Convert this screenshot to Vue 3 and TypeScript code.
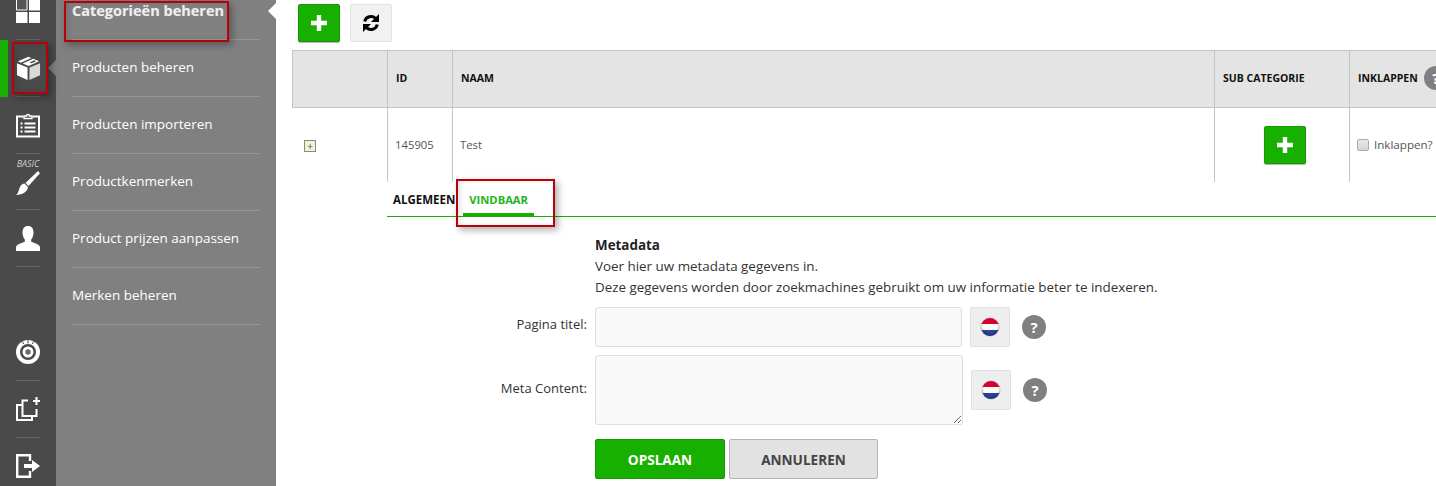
<script setup lang="ts">
const subItems: string[] = [
  'Categorieën beheren',
  'Producten beheren',
  'Producten importeren',
  'Productkenmerken',
  'Product prijzen aanpassen',
  'Merken beheren',
]
</script>

<template>
  <div class="page">
    <nav class="rail">
      <div class="rail-top">
        <div class="rail-item">
          <svg width="24" height="24" viewBox="0 0 24 24">
            <path fill="#fff" d="M13 0h11v11.500H13zM0 13h11.500v11H0zM13 13h11v11H13z" />
            <path fill="#555" stroke="#fff" stroke-width="1" d="M.5 -1h10.500v12H.5z" />
          </svg>
        </div>
        <div class="rail-item active">
          <svg width="25" height="25" viewBox="0 0 26 26">
            <path fill="#fff" d="M1 7.500l11 4.500v13L1 20z" />
            <path fill="#d8d8d8" d="M14 12l11-4.500V20l-11 5z" />
            <path fill="#fff" d="M2 5.500L13 .8l3 1.200L5 7zM7 7.800l11-5 6 2.700-11 5z" />
            <path fill="#4a4a4a" d="M14 6.700l5-2.200 2 .9-5 2.200z" />
          </svg>
          <span class="rail-notch"></span>
        </div>
        <div class="rail-item">
          <svg width="24" height="25" viewBox="0 0 24 25">
            <path fill="none" stroke="#fff" stroke-width="2" d="M7 3.500H1v20h22v-20h-6" />
            <path fill="none" stroke="#fff" stroke-width="1.500" d="M8 5.500V3h2.500a1.500 1.500 0 0 1 3 0H16v2.500z" />
            <path fill="#fff" d="M4.500 9.500h2v2h-2zM8.500 9.500h11v2h-11zM4.500 13.500h2v2h-2zM8.500 13.500h11v2h-11zM4.500 17.500h2v2h-2zM8.500 17.500h11v2h-11z" />
          </svg>
        </div>
        <div class="rail-item basic">
          <span class="basic-label">BASIC</span>
          <svg width="24" height="24" viewBox="0 0 24 24">
            <path fill="#fff" d="M22 0l2 2.200L12.500 15 9.500 12z" />
            <path fill="#fff" d="M8.500 12.500l3.500 3.500c-.5 4-4.500 8-12 8 3-2 2.500-6 4.500-9 1-1.500 2.500-2.300 4-2.500z" />
          </svg>
        </div>
        <div class="rail-item">
          <svg width="24" height="25" viewBox="0 0 24 25">
            <path fill="#fff" d="M12 0c3.800 0 5.500 2.700 5.500 6.500 0 3-1 5.500-2.300 7v2.300c3 1.300 8.800 2.500 8.800 5.700V25H0v-3.500c0-3.200 5.800-4.400 8.800-5.700v-2.300C7.500 12 6.500 9.500 6.500 6.500 6.500 2.700 8.200 0 12 0z" />
          </svg>
        </div>
      </div>
      <div class="rail-bottom">
        <div class="rail-item">
          <svg width="24" height="24" viewBox="0 0 24 24">
            <circle cx="12" cy="12" r="12" fill="#fff" />
            <circle cx="12" cy="12" r="8" fill="#4a4a4a" />
            <circle cx="12" cy="12" r="5.500" fill="#fff" />
            <circle cx="12" cy="12" r="2.700" fill="#6a6a6a" />
            <path stroke="#4a4a4a" stroke-width="1" d="M6.500 1.500l1.200 2.500M12 0v3.500M17.500 1.500l-1.200 2.500" />
          </svg>
        </div>
        <div class="rail-item">
          <svg width="24" height="24" viewBox="0 0 24 24">
            <path fill="none" stroke="#fff" stroke-width="2" d="M12 3.500H6.500V8H1v15h15v-4h4.500v-7M6.500 8v11H16" />
            <path fill="#fff" d="M19.500 0h2v3H24v2h-2.500v3h-2V5H17V3h2.500z" />
          </svg>
        </div>
        <div class="rail-item">
          <svg width="24" height="24" viewBox="0 0 24 24">
            <path fill="none" stroke="#fff" stroke-width="2.400" d="M14 7V1.200H1.200v21.600H14V17" />
            <path fill="#fff" d="M8 10h8V6l8 6-8 6v-4H8z" />
          </svg>
        </div>
      </div>
    </nav>

    <aside class="sub">
      <a v-for="item in subItems" :key="item" class="sub-item">
        <span>{{ item }}</span>
      </a>
      <span class="sub-notch"></span>
    </aside>

    <main class="main">
      <div class="toolbar">
        <button class="btn-add" type="button" aria-label="Toevoegen">
          <svg width="16" height="16" viewBox="0 0 16 16"><path fill="#fff" d="M5.800 0h4.400v5.800H16v4.400h-5.800V16H5.800v-5.800H0V5.800h5.800z" /></svg>
        </button>
        <button class="btn-refresh" type="button" aria-label="Vernieuwen">
          <svg width="18" height="18" viewBox="0 0 18 18">
            <path fill="none" stroke="#000" stroke-width="3" d="M2.700 7.500A6.500 6.500 0 0 1 13.500 4.300" />
            <path fill="#000" d="M17 0v8h-8z" />
            <path fill="none" stroke="#000" stroke-width="3" d="M15.300 10.500A6.500 6.500 0 0 1 4.500 13.700" />
            <path fill="#000" d="M1 18v-8h8z" />
          </svg>
        </button>
      </div>

      <table class="grid">
        <colgroup>
          <col class="c1" /><col class="c2" /><col class="c3" /><col class="c4" /><col class="c5" />
        </colgroup>
        <thead>
          <tr>
            <th></th>
            <th>ID</th>
            <th>NAAM</th>
            <th>SUB CATEGORIE</th>
            <th>
              <span class="th-help">INKLAPPEN<span class="help head-help">?</span></span>
            </th>
          </tr>
        </thead>
        <tbody>
          <tr>
            <td><span class="expander">+</span></td>
            <td>145905</td>
            <td>Test</td>
            <td class="td-add">
              <button class="btn-add" type="button" aria-label="Subcategorie toevoegen">
                <svg width="16" height="16" viewBox="0 0 16 16"><path fill="#fff" d="M5.800 0h4.400v5.800H16v4.400h-5.800V16H5.800v-5.800H0V5.800h5.800z" /></svg>
              </button>
            </td>
            <td>
              <label class="check"><input type="checkbox" /><span>Inklappen?</span></label>
            </td>
          </tr>
        </tbody>
      </table>

      <section class="detail">
        <div class="tabs">
          <span class="tab">ALGEMEEN</span>
          <span class="tab on">VINDBAAR</span>
        </div>

        <div class="intro">
          <h3>Metadata</h3>
          <p>Voer hier uw metadata gegevens in.</p>
          <p>Deze gegevens worden door zoekmachines gebruikt om uw informatie beter te indexeren.</p>
        </div>

        <div class="row row-input">
          <label class="lbl">Pagina titel:</label>
          <input class="field" type="text" />
          <span class="flag-btn">
            <span class="flag"></span>
          </span>
          <span class="help">?</span>
        </div>
        <div class="row">
          <label class="lbl">Meta Content:</label>
          <textarea class="field area"></textarea>
          <span class="flag-btn">
            <span class="flag"></span>
          </span>
          <span class="help">?</span>
        </div>
        <div class="actions">
          <button class="save" type="button">OPSLAAN</button>
          <button class="cancel" type="button">ANNULEREN</button>
        </div>
      </section>
    </main>

    <div class="mark m1"></div>
    <div class="mark m2"></div>
    <div class="mark m3"></div>
  </div>
</template>

<style>
html, body { margin: 0; background: #fff; overflow: hidden; }
</style>

<style scoped>
.page {
  position: relative;
  display: flex;
  width: 1436px;
  height: 486px;
  overflow: hidden;
  font-family: "Open Sans", "Liberation Sans", sans-serif;
  color: #333;
  background: #fff;
}

/* rail */
.rail {
  flex: 0 0 56px;
  height: 486px;
  background: #4a4a4a;
  display: flex;
  flex-direction: column;
  justify-content: space-between;
}
.rail-top { margin-top: -17px; }
.rail-bottom { margin-bottom: -9px; }
.rail-item {
  position: relative;
  height: 56px;
  border-bottom: 1px solid transparent;
  display: flex;
  align-items: center;
  justify-content: center;
}
.rail-item::after {
  content: "";
  position: absolute;
  left: 16px;
  bottom: -1px;
  width: 24px;
  height: 1px;
  background: #636363;
}
.rail-bottom .rail-item:last-child::after { display: none; }
.rail-item.active::before {
  content: "";
  position: absolute;
  left: 0;
  top: 0;
  bottom: -1px;
  width: 8px;
  background: #18b000;
}
.rail-notch {
  position: absolute;
  right: 0;
  top: 20px;
  border-style: solid;
  border-color: transparent #808080 transparent transparent;
  border-width: 8px 8px 8px 0;
}
.basic {
  flex-direction: column;
  justify-content: flex-start;
  padding-top: 5px;
  box-sizing: border-box;
}
.basic svg { margin-top: 3px; }
.basic-label {
  font-size: 9px;
  font-style: italic;
  color: #d0d0d0;
  line-height: 9px;
}

/* sub nav */
.sub {
  position: relative;
  flex: 0 0 220px;
  height: 486px;
  background: #808080;
  padding-left: 16px;
  box-sizing: border-box;
}
.sub-item {
  display: flex;
  align-items: center;
  width: 188px;
  height: 54px;
  padding-bottom: 2px;
  box-sizing: content-box;
  border-bottom: 1px solid #969696;
  color: #fff;
  font-size: 13.500px;
  white-space: nowrap;
}
.sub-item:first-child {
  margin-top: -17px;
  font-size: 14.500px;
  font-weight: 700;
  color: #eee;
  text-shadow: 0 0 1px rgba(255,255,255,.3);
}
.sub-notch {
  position: absolute;
  right: 0;
  top: 3px;
  border-style: solid;
  border-color: transparent #fff transparent transparent;
  border-width: 8px 8px 8px 0;
}

/* main */
.main {
  flex: 1;
  min-width: 0;
  overflow: hidden;
}
.toolbar {
  display: flex;
  gap: 10px;
  padding: 4px 0 0 22px;
  height: 42px;
  margin-bottom: 4px;
}
.btn-add {
  width: 42px;
  height: 38px;
  padding: 0;
  border: 1px solid #149a00;
  border-radius: 2px;
  background: #18b000;
  box-shadow: 0 1px 1px rgba(0,0,0,.3);
  display: flex;
  align-items: center;
  justify-content: center;
}
.btn-refresh {
  width: 42px;
  height: 38px;
  padding: 0;
  border: 1px solid #e2e2e2;
  border-radius: 2px;
  background: #f1f1f1;
  display: flex;
  align-items: center;
  justify-content: center;
}
.grid {
  margin-left: 16px;
  width: 1157px;
  table-layout: fixed;
  border-collapse: separate;
  border-spacing: 0;
  font-size: 11.300px;
}
.c1 { width: 95px; }
.c2 { width: 65px; }
.c3 { width: 762px; }
.c4 { width: 135px; }
.c5 { width: 100px; }
.grid th {
  height: 54px;
  padding: 0 0 2px 8px;
  box-sizing: content-box;
  background: #e4e4e4;
  border-top: 1px solid #c4c4c4;
  border-bottom: 1px solid #c4c4c4;
  border-left: 1px solid #c4c4c4;
  color: #111;
  font-size: 10.500px;
  font-weight: 700;
  text-align: left;
  white-space: nowrap;
}
.grid td {
  height: 72px;
  padding: 0 0 2px 7px;
  box-sizing: content-box;
  border-left: 1px solid #c4c4c4;
  color: #555;
  white-space: nowrap;
}
.grid td:first-child { border-left: 0; padding-left: 12px; padding-bottom: 0; }
.grid td.td-add { padding-bottom: 0; }
.td-add .btn-add { margin-left: 42px; }
.th-help { display: flex; align-items: center; }
.expander {
  display: inline-flex;
  width: 10px;
  height: 10px;
  align-items: center;
  justify-content: center;
  border: 1px solid #8d8d70;
  background: #f2f2dc;
  font-size: 10px;
  line-height: 1;
  color: #555;
}
.check {
  display: flex;
  align-items: center;
  gap: 5px;
  font-size: 11.600px;
}
.check input {
  appearance: none;
  width: 12px;
  height: 12px;
  margin: 2px 0 0;
  border: 1px solid #adadad;
  border-radius: 2px;
  background: linear-gradient(#e8e8e8, #d5d5d5);
}

/* help */
.help {
  flex: none;
  display: inline-flex;
  width: 24px;
  height: 24px;
  border-radius: 50%;
  background: #808080;
  color: #fff;
  font-size: 15px;
  font-weight: 700;
  align-items: center;
  justify-content: center;
  margin-left: 12px;
}
.head-help { margin-left: 6px; }

/* detail */
.detail { margin-left: 111px; }
.tabs {
  display: flex;
  height: 34px;
  border-bottom: 1px solid #18b000;
}
.tab {
  position: relative;
  height: 34px;
  line-height: 35px;
  padding: 0 6px;
  font-size: 11.500px;
  font-weight: 700;
  color: #111;
  box-sizing: border-box;
}
.tab.on {
  width: 71px;
  font-size: 11.200px;
  color: #22b41a;
  margin-left: 2px;
}
.tab.on::after {
  content: "";
  position: absolute;
  left: 0;
  right: 0;
  bottom: -1px;
  height: 4px;
  background: #18b000;
}
.intro {
  margin: 18px 0 9px 208px;
  font-size: 13.400px;
  line-height: 21px;
  color: #333;
}
.intro h3 {
  margin: 0;
  font-size: 13.400px;
  font-weight: 700;
  color: #222;
}
.intro p { margin: 0; }
.row {
  display: flex;
  align-items: center;
  margin-bottom: 8px;
}
.lbl {
  flex: 0 0 200px;
  margin-right: 8px;
  padding-bottom: 4px;
  text-align: right;
  font-size: 13px;
  color: #333;
}
.row-input .lbl { padding-bottom: 6px; }
.field {
  width: 367px;
  height: 40px;
  margin: 0;
  padding: 4px 8px;
  box-sizing: border-box;
  border: 1px solid #ddd;
  border-radius: 3px;
  background: #f9f9f9;
  outline: none;
  display: block;
}
.area { width: 368px; height: 70px; }
.flag-btn {
  flex: none;
  display: flex;
  align-items: center;
  justify-content: center;
  width: 40px;
  height: 40px;
  margin-left: 8px;
  box-sizing: border-box;
  border: 1px solid #e0e0e0;
  border-radius: 2px;
  background: #eee;
}
.flag {
  width: 18px;
  height: 18px;
  border-radius: 50%;
  background: linear-gradient(#d9002b 0 33%, #fbfbfb 33% 66%, #27439a 66% 100%);
  box-shadow: 0 0 1px #333, inset 0 -1px 2px rgba(0,0,0,.35);
}
.actions {
  display: flex;
  gap: 4px;
  margin: 14px 0 0 208px;
}
.save, .cancel {
  height: 40px;
  padding: 0;
  font-family: inherit;
  font-size: 13.600px;
  font-weight: 700;
  border-radius: 2px;
}
.save {
  width: 130px;
  color: #fff;
  background: #18b000;
  border: 1px solid #149a00;
}
.cancel {
  width: 149px;
  color: #444;
  background: #e2e2e2;
  border: 1px solid #b5b5b5;
}

/* annotation boxes */
.mark {
  position: absolute;
  box-sizing: border-box;
  border: 2px solid #b80009;
  box-shadow: 3px 3px 7px rgba(0,0,0,.32), inset 3px 0 5px rgba(0,0,0,.1);
  pointer-events: none;
}
.m1 { left: 64px; top: 1px; width: 165px; height: 41px; }
.m2 { left: 12px; top: 42px; width: 36px; height: 52px; }
.m3 { left: 456px; top: 179px; width: 99px; height: 48px; }
</style>
